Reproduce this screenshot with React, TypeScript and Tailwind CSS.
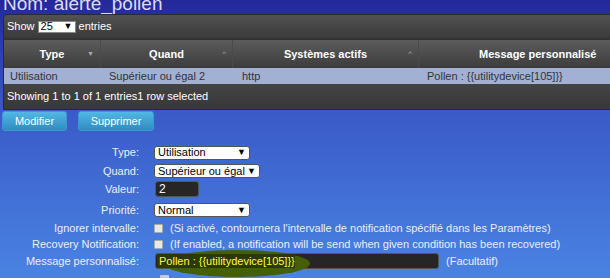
import React from "react";

const font = { fontFamily: '"Liberation Sans", Arial, sans-serif' };

function FakeSelect({ value, width }: { value: string; width: string }) {
  return (
    <div
      className={`flex h-[14px] items-center justify-between rounded-[3px] border border-[#555] bg-white pl-[3px] pr-[3px] text-[11px] leading-none text-black ${width}`}
    >
      <span>{value}</span>
      <span className="text-[9px]">▼</span>
    </div>
  );
}

function Checkbox() {
  return <div className="h-[9px] w-[9px] rounded-[1px] border border-[#aaa] bg-[#e8e8e8]" />;
}

export default function App() {
  return (
    <div
      className="h-[278px] w-[610px] overflow-hidden bg-gradient-to-b from-[#24279a] via-[#3a5ac8] via-40% to-[#4a83e2] text-[11px] text-[#eeeef4]"
      style={font}
    >
      {/* title */}
      <div className="h-[14px] overflow-hidden pl-[3px]">
        <div className="-mt-[6px] text-[19px] leading-[19px] text-[#dcdcf0]">Nom: alerte_pollen</div>
      </div>

      {/* table panel */}
      <div className="ml-[3px] w-[640px] overflow-hidden rounded-tl-[5px] border border-[#2a2a2a] bg-[#3a3a3a]">
        <div className="flex h-[23px] items-center gap-[3px] bg-gradient-to-b from-[#525252] to-[#3a3a3a] pl-[3px] text-white">
          <span>Show</span>
          <div className="flex h-[12px] w-[38px] items-center justify-between border border-[#888] bg-white px-[2px] text-[11px] leading-none text-black">
            <span>25</span>
            <span className="text-[9px]">▼</span>
          </div>
          <span>entries</span>
        </div>
        <div className="h-[2px] bg-[#333]" />
        <div className="grid h-[28px] grid-cols-[97px_132px_186px_225px] bg-gradient-to-b from-[#5c5c5c] to-[#3c3c3c] font-bold text-white">
          <div className="relative flex items-center justify-center border-r border-[#4a4a4a]">
            Type
            <span className="absolute right-[6px] text-[7px] text-[#aaa]">▼</span>
          </div>
          <div className="relative flex items-center justify-center border-r border-[#4a4a4a]">
            Quand
            <span className="absolute right-[6px] text-[8px] font-normal text-[#aaa]">^</span>
          </div>
          <div className="relative flex items-center justify-center border-r border-[#4a4a4a]">
            Systèmes actifs
            <span className="absolute right-[6px] text-[8px] font-normal text-[#aaa]">^</span>
          </div>
          <div className="flex items-center justify-start pl-[60px]">Message personnalisé</div>
        </div>
        <div className="grid h-[16px] grid-cols-[97px_132px_186px_225px] items-center bg-[#a2b1d3] text-[#333]">
          <div className="pl-[6px]">Utilisation</div>
          <div className="pl-[8px]">Supérieur ou égal 2</div>
          <div className="pl-[9px]">http</div>
          <div className="pl-[8px]">Pollen : {"{{utilitydevice[105]}}"}</div>
        </div>
        <div className="flex h-[25px] items-center bg-gradient-to-b from-[#444] to-[#383838] pl-[3px] text-white">
          Showing 1 to 1 of 1 entries1 row selected
        </div>
      </div>

      {/* buttons */}
      <div className="mt-[1px] flex gap-[11px] pl-[2px]">
        <button className="flex h-[20px] w-[65px] items-center justify-center rounded-[3px] border border-[#3a9ccc] bg-gradient-to-b from-[#52b8e4] to-[#2f8cc0] text-[11px] text-white">
          Modifier
        </button>
        <button className="flex h-[20px] w-[76px] items-center justify-center rounded-[3px] border border-[#3a9ccc] bg-gradient-to-b from-[#52b8e4] to-[#2f8cc0] text-[11px] text-white">
          Supprimer
        </button>
      </div>

      {/* form */}
      <div className="mt-[14px] flex flex-col">
        <div className="flex h-[15px] items-center">
          <div className="w-[139px] text-right">Type:</div>
          <div className="ml-[15px]"><FakeSelect value="Utilisation" width="w-[96px]" /></div>
        </div>
        <div className="mt-[4px] flex h-[14px] items-center">
          <div className="w-[139px] text-right">Quand:</div>
          <div className="ml-[15px]"><FakeSelect value="Supérieur ou égal" width="w-[106px]" /></div>
        </div>
        <div className="mt-[3px] flex h-[16px] items-center">
          <div className="w-[139px] text-right">Valeur:</div>
          <div className="ml-[16px] flex h-[16px] w-[44px] items-center rounded-[3px] border border-[#555] bg-[#262626] pl-[3px] text-[12px] text-white">2</div>
        </div>
        <div className="mt-[6px] flex h-[14px] items-center">
          <div className="w-[139px] text-right">Priorité:</div>
          <div className="ml-[15px]"><FakeSelect value="Normal" width="w-[96px]" /></div>
        </div>
        <div className="mt-[4px] flex h-[14px] items-center">
          <div className="w-[139px] text-right">Ignorer intervalle:</div>
          <div className="ml-[15px]"><Checkbox /></div>
          <div className="ml-[7px]">(Si activé, contournera l'intervalle de notification spécifié dans les Paramètres)</div>
        </div>
        <div className="mt-[2px] flex h-[14px] items-center">
          <div className="w-[139px] text-right">Recovery Notification:</div>
          <div className="ml-[15px]"><Checkbox /></div>
          <div className="ml-[7px]">(If enabled, a notification will be send when given condition has been recovered)</div>
        </div>
        <div className="mt-[2px] flex h-[16px] items-center">
          <div className="w-[139px] text-right">Message personnalisé:</div>
          <div className="relative ml-[16px] flex h-[16px] w-[284px] items-center rounded-[3px] border border-[#555] bg-[#262626] pl-[3px]">
            <div className="absolute left-[8px] top-[-4px] h-[27px] w-[146px] rounded-[50%] bg-[#435f00]" />
            <div className="absolute left-[1px] top-[0px] h-[14px] w-[138px] bg-[#2c3806]" />
            <span className="relative text-[11px] text-[#ffff2a]">Pollen : {"{{utilitydevice[105]}}"}</span>
          </div>
          <div className="ml-[7px]">(Facultatif)</div>
        </div>
        <div className="mt-[2px] flex h-[14px] items-center">
          <div className="w-[139px]" />
          <div className="ml-[21px] h-[6px] w-[9px] rounded-[1px] bg-[#c8c8d8]" />
        </div>
      </div>
    </div>
  );
}
